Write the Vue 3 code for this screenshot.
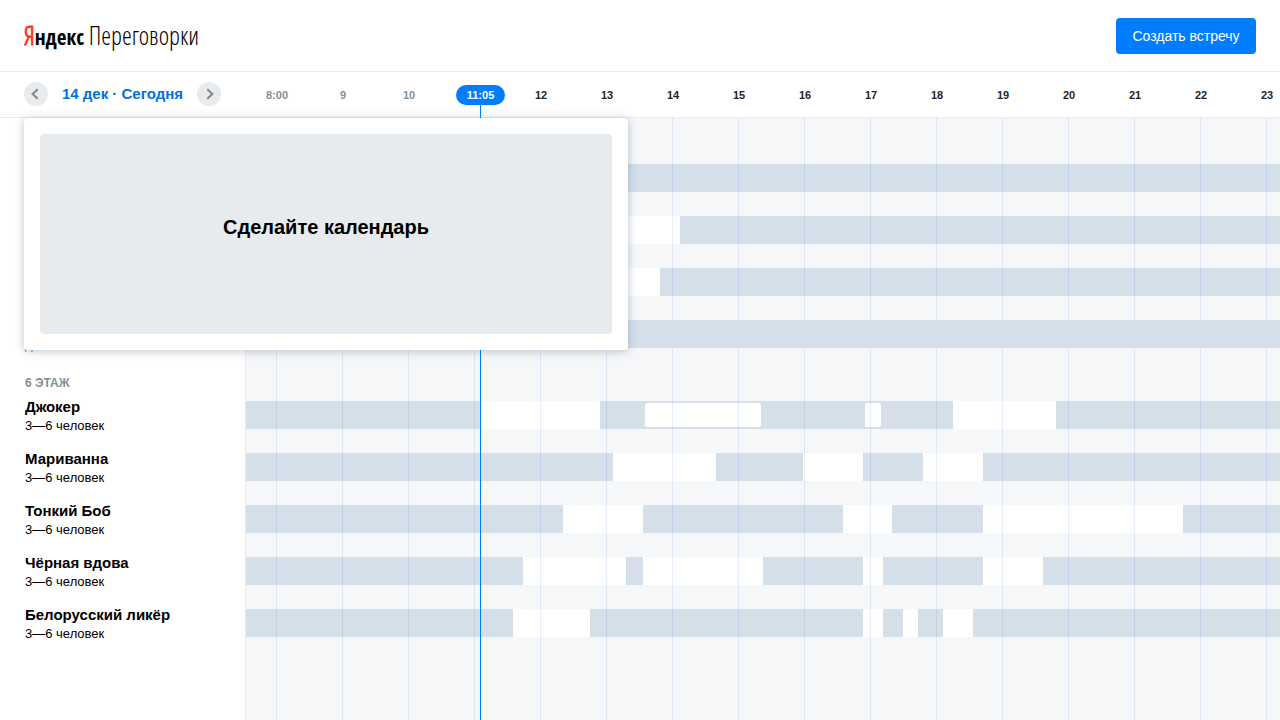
<script setup>
const hours = ['8:00', '9', '10', '', '12', '13', '14', '15', '16', '17', '18', '19', '20', '21', '22', '23']

// Free slots are [start, end] offsets on the day scale, 66 units per hour.
const floors = [
  {
    title: '',
    rooms: [
      { name: '', size: '', free: [] },
      { name: '', size: '', free: [[330, 434]] },
      { name: '', size: '', free: [[330, 414]] },
      { name: '', size: 'до 10 человек', free: [], disabled: true },
    ],
  },
  {
    title: '6 этаж',
    rooms: [
      { name: 'Джокер', size: '3—6 человек', free: [[235, 354], [399, 515, true], [619, 635, true], [707, 810]] },
      { name: 'Мариванна', size: '3—6 человек', free: [[367, 470], [557, 617], [677, 737]] },
      { name: 'Тонкий Боб', size: '3—6 человек', free: [[317, 397], [597, 646], [737, 937]] },
      { name: 'Чёрная вдова', size: '3—6 человек', free: [[277, 380], [397, 517], [617, 637], [737, 797]] },
      { name: 'Белорусский ликёр', size: '3—6 человек', free: [[267, 344], [617, 637], [657, 672], [697, 727]] },
    ],
  },
]

function slots(free) {
  let end = 0
  return free.map(([from, to, inset]) => {
    const slot = { inset, style: { marginLeft: `${from - end}px`, width: `${to - from}px` } }
    end = to
    return slot
  })
}
</script>

<template>
  <div class="page">
    <header class="header">
      <h1 class="logo"><span class="red">Я</span><span class="brand">ндекс</span> Переговорки</h1>
      <button class="create" type="button">Создать встречу</button>
    </header>

    <div class="toolbar">
      <div class="day">
        <button class="arrow" type="button" aria-label="Предыдущий день">
          <svg width="24" height="24" viewBox="0 0 24 24"><path d="M13.8 7.2 8.6 12l5.2 4.8" /></svg>
        </button>
        <button class="date" type="button">14 дек · Сегодня</button>
        <button class="arrow" type="button" aria-label="Следующий день">
          <svg width="24" height="24" viewBox="0 0 24 24"><path d="M10.2 7.2l5.2 4.8-5.2 4.8" /></svg>
        </button>
      </div>
      <ol class="hours">
        <li v-for="(hour, i) in hours" :key="i" :class="{ past: i < 3 }">{{ hour }}</li>
      </ol>
    </div>

    <main class="schedule">
      <section v-for="(floor, f) in floors" :key="f" class="floor">
        <h2 class="floor-title">{{ floor.title }}</h2>
        <div v-for="(room, r) in floor.rooms" :key="r" class="room" :class="{ disabled: room.disabled }">
          <div class="info">
            <h3 class="name">{{ room.name }}</h3>
            <p class="size">{{ room.size }}</p>
          </div>
          <div class="track">
            <div v-for="(slot, s) in slots(room.free)" :key="s" class="slot" :class="{ inset: slot.inset }" :style="slot.style"></div>
          </div>
        </div>
      </section>
      <div class="lines">
        <i v-for="(hour, i) in hours" :key="i"></i>
      </div>
      <div class="calendar">
        <div class="calendar-body">Сделайте календарь</div>
      </div>
    </main>

    <div class="now"><time>11:05</time></div>
  </div>
</template>

<style>
body {
  margin: 0;
}
</style>

<style scoped>
.page {
  position: relative;
  display: flex;
  flex-direction: column;
  min-height: 100vh;
  overflow: hidden;
  background: #fff;
  color: #000;
  font-family: "Liberation Sans", Arial, sans-serif;
}
h1, h2, h3, p, ol {
  margin: 0;
  padding: 0;
}
button {
  border: 0;
  padding: 0;
  font-family: inherit;
  cursor: pointer;
}
.header {
  display: flex;
  align-items: center;
  justify-content: space-between;
  height: 71px;
  padding: 0 24px;
  border-bottom: 1px solid #e9ecef;
}
.logo {
  font: 300 25px/32px "Open Sans Condensed Light", "Open Sans Condensed", "Liberation Sans Narrow", sans-serif;
  white-space: nowrap;
}
.brand {
  font-family: "Open Sans Condensed", "Liberation Sans Narrow", sans-serif;
  font-size: 21px;
  font-weight: 700;
}
.red {
  color: #f33;
  -webkit-text-stroke: 1px #f33;
}
.create {
  width: 140px;
  height: 36px;
  border-radius: 4px;
  background: #007dff;
  color: #fff;
  font-size: 14px;
}
.toolbar {
  display: flex;
  height: 45px;
  border-bottom: 1px solid #e9ecef;
}
.day {
  display: flex;
  flex: none;
  align-items: center;
  justify-content: space-between;
  box-sizing: border-box;
  width: 244px;
  padding: 0 23px 2px 24px;
}
.arrow {
  width: 24px;
  height: 24px;
  border-radius: 50%;
  background: #e7ebee;
}
.arrow svg {
  display: block;
  fill: none;
  stroke: #858585;
  stroke-width: 2;
}
.date {
  background: none;
  color: #0070e0;
  font-size: 15px;
  font-weight: 700;
}
.hours {
  display: flex;
  flex: 1;
  min-width: 0;
  overflow: hidden;
  list-style: none;
}
.hours li {
  flex: none;
  width: 66px;
  color: #252525;
  font-size: 11px;
  font-weight: 700;
  line-height: 46px;
  text-align: center;
}
.hours .past {
  color: #858e98;
}
.schedule {
  position: relative;
  flex: 1;
  background: linear-gradient(to right, #fff 245px, #e9ecef 245px, #e9ecef 246px, #f6f7f9 246px);
}
.floor:first-child {
  padding-top: 17px;
}
.floor-title {
  height: 29px;
  padding-left: 25px;
  color: #858e98;
  font-size: 12px;
  line-height: 22px;
  text-transform: uppercase;
}
.room {
  display: flex;
  height: 52px;
}
.info {
  flex: none;
  box-sizing: border-box;
  width: 246px;
  padding-left: 25px;
}
.name {
  height: 16px;
  margin-top: -3px;
  font-size: 15px;
  line-height: 18px;
}
.size {
  padding-top: 4px;
  font-size: 13px;
  line-height: 16px;
}
.disabled .size {
  color: #858e98;
}
.track {
  display: flex;
  flex: 1;
  align-items: center;
  min-width: 0;
  height: 28px;
  background: #d5dfe9;
}
.disabled .track {
  position: relative;
  z-index: 1;
}
.slot {
  flex: none;
  height: 28px;
  background: #fff;
}
.inset {
  height: 24px;
  border-radius: 2px;
}
.lines {
  position: absolute;
  inset: 0 0 0 276px;
  display: flex;
  overflow: hidden;
}
.lines i {
  flex: none;
  box-sizing: border-box;
  width: 66px;
  border-left: 1px solid rgba(0, 90, 225, 0.1);
}
.calendar {
  position: absolute;
  z-index: 3;
  top: 0;
  left: 24px;
  padding: 16px;
  border-radius: 4px;
  background: #fff;
  box-shadow: 0 1px 10px rgba(0, 44, 92, 0.28);
}
.calendar-body {
  display: flex;
  align-items: center;
  justify-content: center;
  box-sizing: border-box;
  width: 572px;
  height: 200px;
  padding-bottom: 14px;
  border-radius: 4px;
  background: #e7ebee;
  font-size: 20px;
  font-weight: 700;
}
.now {
  position: absolute;
  z-index: 2;
  top: 85px;
  bottom: 0;
  left: 456px;
  width: 49px;
  background: linear-gradient(#007dff, #007dff) 24px 0 / 1px 100% no-repeat;
}
.now time {
  display: block;
  border-radius: 10px;
  background: #007dff;
  color: #fff;
  font-size: 11px;
  font-weight: 700;
  line-height: 20px;
  text-align: center;
}
</style>
